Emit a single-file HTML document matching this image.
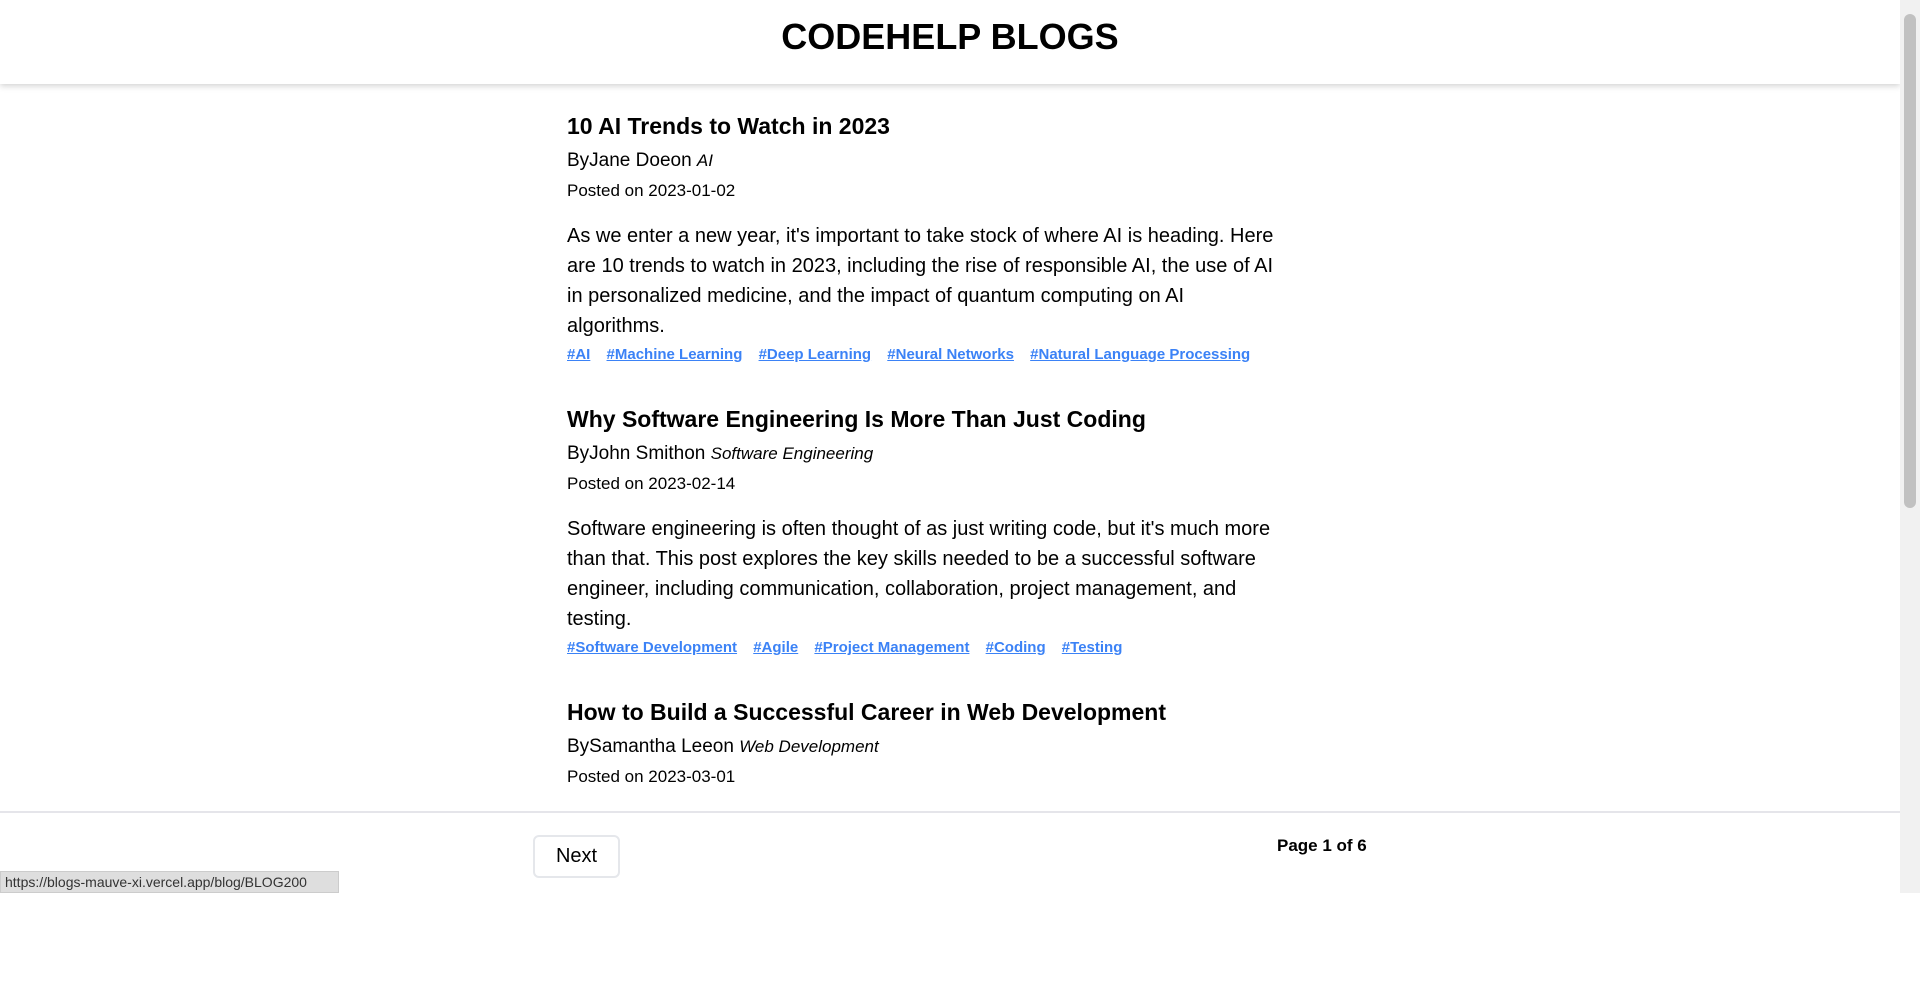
<!DOCTYPE html>
<html><head><meta charset="utf-8"><style>
*{margin:0;padding:0;box-sizing:border-box}
html,body{width:1920px;height:893px;overflow:hidden;background:#fff;font-family:"Liberation Sans",sans-serif;color:#000}
.hdr{position:absolute;left:0;top:0;width:1900px;height:84px;box-shadow:0 2px 6px rgba(0,0,0,.18);background:#fff;text-align:center;z-index:2}
.hdr h1{font-size:36px;font-weight:700;line-height:74px}
.main{position:absolute;left:567px;top:108px;width:725px}
.post{height:293px;overflow:hidden}
.t{font-size:23px;font-weight:700;line-height:36px}
.by{font-size:19px;line-height:30px;margin-top:2px}
.by i{font-size:17px}
.d{font-size:17px;line-height:30px;margin-bottom:15px}
.p{font-size:20px;line-height:30px}
.tags{font-size:15px;font-weight:700;line-height:24px;margin-top:2px}
.tags a{color:#3b82f6;text-decoration:underline;margin-right:12px}
.ftr{position:absolute;left:0;top:811px;width:1900px;height:82px;border-top:2px solid #e5e5ea;background:#fff;z-index:3}
.btn{position:absolute;left:533px;top:22px;width:87px;height:43px;border:2px solid #e5e7eb;border-radius:6px;font-size:20px;line-height:39px;text-align:center}
.pg{position:absolute;left:1277px;top:23px;font-size:17px;font-weight:700}
.sb{position:absolute;left:1900px;top:0;width:20px;height:893px;background:#f1f1f1;z-index:4}
.th{position:absolute;left:4px;top:14px;width:12px;height:494px;background:#c1c1c1;border-radius:6px}
.st{position:absolute;left:0;top:871px;width:339px;height:22px;background:#dedede;border:1px solid #ccc;font-size:14px;line-height:20px;padding-left:4px;color:#333;z-index:5}
</style></head><body>
<div class="hdr"><h1>CODEHELP BLOGS</h1></div>
<div class="main">
<div class="post">
<div class="t">10 AI Trends to Watch in 2023</div>
<div class="by">ByJane Doeon <i>AI</i></div>
<div class="d">Posted on 2023-01-02</div>
<div class="p">As we enter a new year, it's important to take stock of where AI is heading. Here are 10 trends to watch in 2023, including the rise of responsible AI, the use of AI in personalized medicine, and the impact of quantum computing on AI<br>algorithms.</div>
<div class="tags"><a>#AI</a> <a>#Machine Learning</a> <a>#Deep Learning</a> <a>#Neural Networks</a> <a>#Natural Language Processing</a></div>
</div>
<div class="post">
<div class="t">Why Software Engineering Is More Than Just Coding</div>
<div class="by">ByJohn Smithon <i>Software Engineering</i></div>
<div class="d">Posted on 2023-02-14</div>
<div class="p">Software engineering is often thought of as just writing code, but it's much more than that. This post explores the key skills needed to be a successful software engineer, including communication, collaboration, project management, and testing.</div>
<div class="tags"><a>#Software Development</a> <a>#Agile</a> <a>#Project Management</a> <a>#Coding</a> <a>#Testing</a></div>
</div>
<div class="post">
<div class="t">How to Build a Successful Career in Web Development</div>
<div class="by">BySamantha Leeon <i>Web Development</i></div>
<div class="d">Posted on 2023-03-01</div>
</div>
</div>
<div class="ftr"><div class="btn">Next</div><div class="pg">Page 1 of 6</div></div>
<div class="sb"><div class="th"></div></div>
<div class="st">https://blogs-mauve-xi.vercel.app/blog/BLOG200</div>
</body></html>
